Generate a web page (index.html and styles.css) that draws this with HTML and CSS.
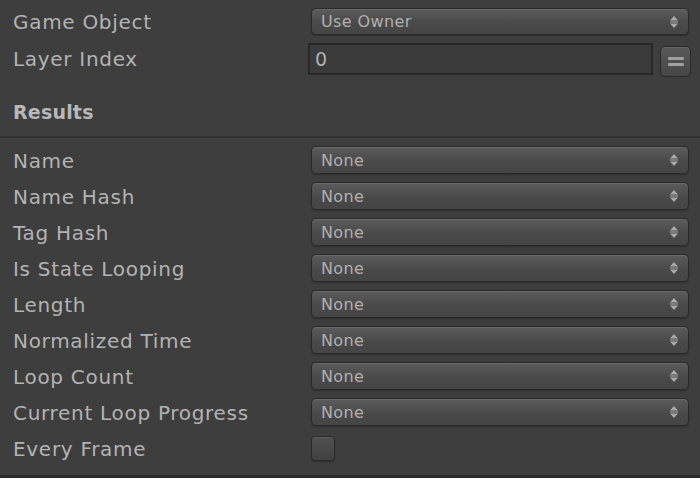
FILE: index.html
```html
<!DOCTYPE html>
<html>
<head>
<meta charset="utf-8">
<link rel="stylesheet" href="styles.css">
</head>
<body>
<div class="panel">
  <div class="row row-first">
    <div class="label">Game Object</div>
    <div class="popup"><span>Use Owner</span><svg class="arrows" width="8" height="12" viewBox="0 0 8 12"><path d="M4 0 L8 4.5 L0 4.5 Z M4 12 L0 7.5 L8 7.5 Z" fill="#a9a9a9"/><rect x="0" y="5.5" width="8" height="1" fill="#a9a9a9"/></svg></div>
  </div>
  <div class="row">
    <div class="label">Layer Index</div>
    <div class="field-wrap">
      <div class="field">0</div>
      <div class="eq-btn"><span class="bar"></span><span class="bar"></span></div>
    </div>
  </div>
  <div class="header">Results</div>
  <div class="results">
    <div class="row">
      <div class="label">Name</div>
      <div class="popup"><span>None</span><svg class="arrows" width="8" height="12" viewBox="0 0 8 12"><path d="M4 0 L8 4.5 L0 4.5 Z M4 12 L0 7.5 L8 7.5 Z" fill="#a9a9a9"/><rect x="0" y="5.5" width="8" height="1" fill="#a9a9a9"/></svg></div>
    </div>
    <div class="row">
      <div class="label">Name Hash</div>
      <div class="popup"><span>None</span><svg class="arrows" width="8" height="12" viewBox="0 0 8 12"><path d="M4 0 L8 4.5 L0 4.5 Z M4 12 L0 7.5 L8 7.5 Z" fill="#a9a9a9"/><rect x="0" y="5.5" width="8" height="1" fill="#a9a9a9"/></svg></div>
    </div>
    <div class="row">
      <div class="label">Tag Hash</div>
      <div class="popup"><span>None</span><svg class="arrows" width="8" height="12" viewBox="0 0 8 12"><path d="M4 0 L8 4.5 L0 4.5 Z M4 12 L0 7.5 L8 7.5 Z" fill="#a9a9a9"/><rect x="0" y="5.5" width="8" height="1" fill="#a9a9a9"/></svg></div>
    </div>
    <div class="row">
      <div class="label">Is State Looping</div>
      <div class="popup"><span>None</span><svg class="arrows" width="8" height="12" viewBox="0 0 8 12"><path d="M4 0 L8 4.5 L0 4.5 Z M4 12 L0 7.5 L8 7.5 Z" fill="#a9a9a9"/><rect x="0" y="5.5" width="8" height="1" fill="#a9a9a9"/></svg></div>
    </div>
    <div class="row">
      <div class="label">Length</div>
      <div class="popup"><span>None</span><svg class="arrows" width="8" height="12" viewBox="0 0 8 12"><path d="M4 0 L8 4.5 L0 4.5 Z M4 12 L0 7.5 L8 7.5 Z" fill="#a9a9a9"/><rect x="0" y="5.5" width="8" height="1" fill="#a9a9a9"/></svg></div>
    </div>
    <div class="row">
      <div class="label">Normalized Time</div>
      <div class="popup"><span>None</span><svg class="arrows" width="8" height="12" viewBox="0 0 8 12"><path d="M4 0 L8 4.5 L0 4.5 Z M4 12 L0 7.5 L8 7.5 Z" fill="#a9a9a9"/><rect x="0" y="5.5" width="8" height="1" fill="#a9a9a9"/></svg></div>
    </div>
    <div class="row">
      <div class="label">Loop Count</div>
      <div class="popup"><span>None</span><svg class="arrows" width="8" height="12" viewBox="0 0 8 12"><path d="M4 0 L8 4.5 L0 4.5 Z M4 12 L0 7.5 L8 7.5 Z" fill="#a9a9a9"/><rect x="0" y="5.5" width="8" height="1" fill="#a9a9a9"/></svg></div>
    </div>
    <div class="row">
      <div class="label">Current Loop Progress</div>
      <div class="popup"><span>None</span><svg class="arrows" width="8" height="12" viewBox="0 0 8 12"><path d="M4 0 L8 4.5 L0 4.5 Z M4 12 L0 7.5 L8 7.5 Z" fill="#a9a9a9"/><rect x="0" y="5.5" width="8" height="1" fill="#a9a9a9"/></svg></div>
    </div>
    <div class="row">
      <div class="label">Every Frame</div>
      <div class="checkbox"></div>
    </div>
  </div>
</div>
<div class="footer"></div>
</body>
</html>
```
FILE: styles.css
```css
html, body {
  margin: 0;
  padding: 0;
  background: #2c2c2c;
  width: 700px;
  height: 478px;
  overflow: hidden;
}

.panel {
  background: #3e3e3e;
  height: 475px;
  padding-top: 4px;
  box-sizing: border-box;
  font-family: "DejaVu Sans", "Liberation Sans", sans-serif;
}

.row {
  display: flex;
  align-items: center;
  height: 36px;
  padding-left: 13px;
}

.row-first {
  height: 35px;
  margin-bottom: 1px;
}

.label {
  width: 298px;
  flex: none;
  font-size: 20px;
  letter-spacing: 0.7px;
  color: #b3b3b3;
  white-space: nowrap;
  padding-top: 1px;
}

.popup {
  width: 378px;
  height: 27px;
  box-sizing: border-box;
  display: flex;
  align-items: center;
  justify-content: space-between;
  padding: 0 10px 0 9px;
  border: 1px solid #2b2b2b;
  border-radius: 5px;
  background: linear-gradient(#5c5c5c, #4a4a4a 55%, #454545);
  box-shadow: inset 0 1px 0 #6a6a6a, 0 1px 1px #2e2e2e;
  font-size: 16px;
  letter-spacing: 0.4px;
  color: #b0b0b0;
}

.results .popup {
  height: 28px;
}

.arrows {
  flex: none;
}

.field-wrap {
  display: flex;
  align-items: center;
  margin-left: -3px;
  margin-top: 2px;
}

.field {
  width: 345px;
  height: 32px;
  box-sizing: border-box;
  border: 2px solid #282828;
  background: #3b3b3b;
  color: #b0b0b0;
  font-size: 19px;
  line-height: 28px;
  padding-left: 5px;
}

.eq-btn {
  width: 31px;
  height: 31px;
  box-sizing: border-box;
  margin-left: 7px;
  margin-top: 4px;
  border: 1px solid #2a2a2a;
  border-radius: 5px;
  background: linear-gradient(#595959, #464646);
  box-shadow: inset 0 1px 0 #666;
  display: flex;
  flex-direction: column;
  align-items: center;
  justify-content: center;
  gap: 3px;
}

.bar {
  width: 16px;
  height: 3px;
  border-radius: 1px;
  background: #a0a0a0;
}

.header {
  height: 62px;
  box-sizing: border-box;
  padding-left: 13px;
  padding-top: 25px;
  font-size: 19px;
  font-weight: bold;
  letter-spacing: 0.2px;
  color: #b8b8b8;
  border-bottom: 2px solid #303030;
}

.results {
  padding-top: 4px;
}

.checkbox {
  width: 24px;
  height: 25px;
  box-sizing: border-box;
  border: 1px solid #2a2a2a;
  border-radius: 4px;
  background: linear-gradient(#515151, #414141);
  box-shadow: inset 0 1px 0 #5e5e5e, 0 1px 1px #2e2e2e;
}

.footer {
  height: 3px;
}
```
